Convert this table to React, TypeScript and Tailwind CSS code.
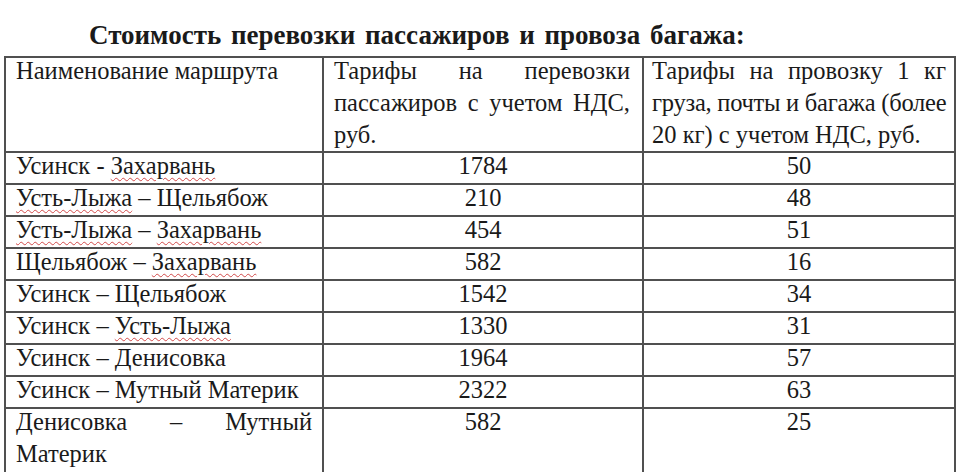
const rows: { route: React.ReactNode; pass: string; cargo: string }[] = [];

function Sp({ children }: { children: React.ReactNode }) {
  return (
    <span className="underline decoration-wavy decoration-[#d24a4a] decoration-1 underline-offset-[3px]">
      {children}
    </span>
  );
}

rows.push(
  { route: <>Усинск - <Sp>Захарвань</Sp></>, pass: '1784', cargo: '50' },
  { route: <><Sp>Усть-Лыжа</Sp> – Щельябож</>, pass: '210', cargo: '48' },
  { route: <><Sp>Усть-Лыжа</Sp> – <Sp>Захарвань</Sp></>, pass: '454', cargo: '51' },
  { route: <>Щельябож – <Sp>Захарвань</Sp></>, pass: '582', cargo: '16' },
  { route: <>Усинск – Щельябож</>, pass: '1542', cargo: '34' },
  { route: <>Усинск – <Sp>Усть-Лыжа</Sp></>, pass: '1330', cargo: '31' },
  { route: <>Усинск – Денисовка</>, pass: '1964', cargo: '57' },
  { route: <>Усинск – Мутный Материк</>, pass: '2322', cargo: '63' },
);

function J({ children, className = '' }: { children: React.ReactNode; className?: string }) {
  return (
    <div className={'whitespace-nowrap text-justify [text-align-last:justify] ' + className}>
      {children}
    </div>
  );
}

const cell = 'border-r-2 border-b-2 border-[#505050] align-top p-0';

export default function App() {
  return (
    <div className="min-h-[472px] bg-white text-[#1a1a1a] font-['Liberation_Serif','Times_New_Roman',serif]">
      <div className="h-[56px] pl-[89px] pt-[22px] text-[27px] font-bold leading-[27px] [word-spacing:3px]">
        Стоимость перевозки пассажиров и провоза багажа:
      </div>
      <table className="ml-[4px] w-[952px] table-fixed border-separate border-spacing-0 border-l-2 border-t-2 border-[#505050] text-[24.5px] leading-[32px]">
        <colgroup>
          <col className="w-[318px]" />
          <col className="w-[320px]" />
          <col className="w-[312px]" />
        </colgroup>
        <tbody>
          <tr className="h-[95px]">
            <td className={cell}>
              <div className="-mt-[3px] pl-[10px] pr-[10px]">Наименование маршрута</div>
            </td>
            <td className={cell}>
              <div className="-mt-[3px] pl-[10px] pr-[12px]">
                <J>Тарифы на перевозки</J>
                <J>пассажиров с учетом НДС,</J>
                <div>руб.</div>
              </div>
            </td>
            <td className={cell}>
              <div className="-mt-[3px] pl-[8px] pr-[8px]">
                <J>Тарифы на провозку 1 кг</J>
                <J className="tracking-[-0.25px]">груза, почты и багажа (более</J>
                <div className="whitespace-nowrap">20 кг) с учетом НДС, руб.</div>
              </div>
            </td>
          </tr>
          {rows.map((r, i) => (
            <tr key={i} className="h-[32px]">
              <td className={cell}>
                <div className="-mt-[3px] pl-[10px] pr-[10px] whitespace-nowrap">{r.route}</div>
              </td>
              <td className={cell}>
                <div className="-mt-[3px] text-center">{r.pass}</div>
              </td>
              <td className={cell}>
                <div className="-mt-[3px] text-center">{r.cargo}</div>
              </td>
            </tr>
          ))}
          <tr className="h-[72px]">
            <td className={cell}>
              <div className="-mt-[3px] pl-[10px] pr-[10px]">
                <J>Денисовка – Мутный</J>
                <div>Материк</div>
              </div>
            </td>
            <td className={cell}>
              <div className="-mt-[3px] text-center">582</div>
            </td>
            <td className={cell}>
              <div className="-mt-[3px] text-center">25</div>
            </td>
          </tr>
        </tbody>
      </table>
    </div>
  );
}
